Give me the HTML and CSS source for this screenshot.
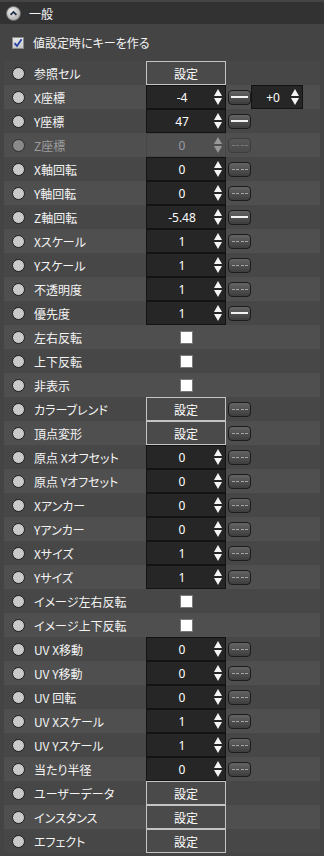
FILE: index.html
```html
<!DOCTYPE html>
<html lang="ja">
<head>
  <meta charset="UTF-8">
  <meta name="viewport" content="width=device-width, initial-scale=1.0">
  <title>一般</title>
  <link rel="stylesheet" href="styles.css">
</head>
<body>
  <div class="panel">
    <div class="header">
      <svg class="fold-icon" width="15" height="15" viewBox="0 0 15 15">
        <defs>
          <radialGradient id="knob" cx="0.4" cy="0.35" r="0.7">
            <stop offset="0" stop-color="#f2f2f2"/>
            <stop offset="1" stop-color="#a8a8a8"/>
          </radialGradient>
        </defs>
        <circle cx="7.5" cy="7.5" r="7" fill="url(#knob)" stroke="#6a6a6a" stroke-width="0.8"/>
        <path d="M4.6 8.8 L7.5 5.9 L10.4 8.8" fill="none" stroke="#1d2e48" stroke-width="1.8"/>
      </svg>
      <span>一般</span>
    </div>

    <label class="keyopt">
      <span class="keycheck">
        <svg width="10" height="10" viewBox="0 0 10 10"><path d="M1.5 5.2 L4 8 L8.6 1.2" fill="none" stroke="#2b47a6" stroke-width="1.9"/></svg>
      </span>
      値設定時にキーを作る
    </label>

    <div class="rows">
      <div class="row"><span class="radio"></span><span class="name">参照セル</span><button class="set">設定</button></div>
      <div class="row"><span class="radio"></span><span class="name">X座標</span><div class="spin"><span class="num">-4</span><i class="arrows"></i></div><span class="bind on"><b></b></span><div class="spin extra"><span class="num">+0</span><i class="arrows"></i></div></div>
      <div class="row"><span class="radio"></span><span class="name">Y座標</span><div class="spin"><span class="num">47</span><i class="arrows"></i></div><span class="bind on"><b></b></span></div>
      <div class="row disabled"><span class="radio"></span><span class="name">Z座標</span><div class="spin"><span class="num">0</span><i class="arrows"></i></div><span class="bind"><b></b></span></div>
      <div class="row"><span class="radio"></span><span class="name">X軸回転</span><div class="spin"><span class="num">0</span><i class="arrows"></i></div><span class="bind"><b></b></span></div>
      <div class="row"><span class="radio"></span><span class="name">Y軸回転</span><div class="spin"><span class="num">0</span><i class="arrows"></i></div><span class="bind"><b></b></span></div>
      <div class="row"><span class="radio"></span><span class="name">Z軸回転</span><div class="spin"><span class="num">-5.48</span><i class="arrows"></i></div><span class="bind on"><b></b></span></div>
      <div class="row"><span class="radio"></span><span class="name">Xスケール</span><div class="spin"><span class="num">1</span><i class="arrows"></i></div><span class="bind"><b></b></span></div>
      <div class="row"><span class="radio"></span><span class="name">Yスケール</span><div class="spin"><span class="num">1</span><i class="arrows"></i></div><span class="bind"><b></b></span></div>
      <div class="row"><span class="radio"></span><span class="name">不透明度</span><div class="spin"><span class="num">1</span><i class="arrows"></i></div><span class="bind"><b></b></span></div>
      <div class="row"><span class="radio"></span><span class="name">優先度</span><div class="spin"><span class="num">1</span><i class="arrows"></i></div><span class="bind on"><b></b></span></div>
      <div class="row"><span class="radio"></span><span class="name">左右反転</span><div class="boolbox"><span class="box"></span></div></div>
      <div class="row"><span class="radio"></span><span class="name">上下反転</span><div class="boolbox"><span class="box"></span></div></div>
      <div class="row"><span class="radio"></span><span class="name">非表示</span><div class="boolbox"><span class="box"></span></div></div>
      <div class="row"><span class="radio"></span><span class="name">カラーブレンド</span><button class="set">設定</button><span class="bind"><b></b></span></div>
      <div class="row"><span class="radio"></span><span class="name">頂点変形</span><button class="set">設定</button><span class="bind"><b></b></span></div>
      <div class="row"><span class="radio"></span><span class="name">原点 Xオフセット</span><div class="spin"><span class="num">0</span><i class="arrows"></i></div><span class="bind"><b></b></span></div>
      <div class="row"><span class="radio"></span><span class="name">原点 Yオフセット</span><div class="spin"><span class="num">0</span><i class="arrows"></i></div><span class="bind"><b></b></span></div>
      <div class="row"><span class="radio"></span><span class="name">Xアンカー</span><div class="spin"><span class="num">0</span><i class="arrows"></i></div><span class="bind"><b></b></span></div>
      <div class="row"><span class="radio"></span><span class="name">Yアンカー</span><div class="spin"><span class="num">0</span><i class="arrows"></i></div><span class="bind"><b></b></span></div>
      <div class="row"><span class="radio"></span><span class="name">Xサイズ</span><div class="spin"><span class="num">1</span><i class="arrows"></i></div><span class="bind"><b></b></span></div>
      <div class="row"><span class="radio"></span><span class="name">Yサイズ</span><div class="spin"><span class="num">1</span><i class="arrows"></i></div><span class="bind"><b></b></span></div>
      <div class="row"><span class="radio"></span><span class="name">イメージ左右反転</span><div class="boolbox"><span class="box"></span></div></div>
      <div class="row"><span class="radio"></span><span class="name">イメージ上下反転</span><div class="boolbox"><span class="box"></span></div></div>
      <div class="row"><span class="radio"></span><span class="name">UV X移動</span><div class="spin"><span class="num">0</span><i class="arrows"></i></div><span class="bind"><b></b></span></div>
      <div class="row"><span class="radio"></span><span class="name">UV Y移動</span><div class="spin"><span class="num">0</span><i class="arrows"></i></div><span class="bind"><b></b></span></div>
      <div class="row"><span class="radio"></span><span class="name">UV 回転</span><div class="spin"><span class="num">0</span><i class="arrows"></i></div><span class="bind"><b></b></span></div>
      <div class="row"><span class="radio"></span><span class="name">UV Xスケール</span><div class="spin"><span class="num">1</span><i class="arrows"></i></div><span class="bind"><b></b></span></div>
      <div class="row"><span class="radio"></span><span class="name">UV Yスケール</span><div class="spin"><span class="num">1</span><i class="arrows"></i></div><span class="bind"><b></b></span></div>
      <div class="row"><span class="radio"></span><span class="name">当たり半径</span><div class="spin"><span class="num">0</span><i class="arrows"></i></div><span class="bind"><b></b></span></div>
      <div class="row"><span class="radio"></span><span class="name">ユーザーデータ</span><button class="set">設定</button></div>
      <div class="row"><span class="radio"></span><span class="name">インスタンス</span><button class="set">設定</button></div>
      <div class="row"><span class="radio"></span><span class="name">エフェクト</span><button class="set">設定</button></div>
    </div>
  </div>
</body>
</html>
```

FILE: styles.css
```css
* {
  margin: 0;
  padding: 0;
  box-sizing: border-box;
}

body {
  width: 324px;
  height: 856px;
  overflow: hidden;
  background: #4a4a4a;
  color: #f4f4f4;
  font-family: "Noto Sans CJK JP", "Noto Sans", sans-serif;
  font-size: 12px;
  font-feature-settings: "palt";
}

.panel {
  height: 100%;
  padding-top: 2px;
  background: #444;
}

.header {
  height: 22px;
  background: #323232;
  display: flex;
  align-items: center;
  gap: 8px;
  padding-left: 6px;
}

.fold-icon {
  display: block;
}

.keyopt {
  height: 37px;
  display: flex;
  align-items: center;
  gap: 9px;
  padding-left: 12px;
}

.keycheck {
  width: 12px;
  height: 12px;
  background: linear-gradient(#e8e8e8, #c8c8c8);
  border: 1px solid #8a8a8a;
  display: flex;
  align-items: center;
  justify-content: center;
}

.keycheck svg {
  display: block;
}

.rows {
  padding: 0 4px;
}

.row {
  height: 24px;
  display: flex;
  align-items: center;
  padding-left: 8px;
  background: #474747;
}

.row:nth-child(even) {
  background: #4f4f4f;
}

.radio {
  width: 13px;
  height: 13px;
  margin-right: 9px;
  border-radius: 50%;
  background: #c9c9c9;
  border: 1px solid #1c1c1c;
}

.name {
  width: 112px;
  white-space: nowrap;
}

.set {
  width: 80px;
  height: 24px;
  background: #4a4a4a;
  border: 1px solid #c4c4c4;
  color: #fff;
  font: inherit;
}

.spin {
  width: 80px;
  height: 24px;
  display: flex;
  align-items: center;
  padding-right: 3px;
  background: #262626;
  border: 1px solid #131313;
  color: #fff;
  font-family: "Noto Sans", sans-serif;
}

.spin .num {
  flex: 1;
  text-align: center;
  padding-left: 3px;
}

.arrows {
  width: 8px;
  height: 16px;
  display: flex;
  flex-direction: column;
  justify-content: space-between;
}

.arrows::before,
.arrows::after {
  content: "";
  height: 7px;
  background: #f4f4f4;
}

.arrows::before {
  clip-path: polygon(50% 0, 100% 100%, 0 100%);
}

.arrows::after {
  clip-path: polygon(0 0, 100% 0, 50% 100%);
}

.spin.extra {
  width: 52px;
}

.bind {
  width: 23px;
  height: 15px;
  margin-left: 2px;
  border: 1px solid #1c1c1c;
  border-radius: 4px;
  background: linear-gradient(#646464, #3d3d3d);
  display: flex;
  align-items: center;
  justify-content: center;
}

.bind b {
  display: block;
  width: 16px;
  height: 1px;
  background: repeating-linear-gradient(90deg, #a2a2a2 0 3px, transparent 3px 4.33px);
}

.bind.on b {
  width: 17px;
  height: 2px;
  background: #f2f2f2;
}

.boolbox {
  width: 80px;
  display: flex;
  justify-content: center;
}

.box {
  width: 13px;
  height: 13px;
  background: #fff;
  border: 1px solid #7a7a7a;
}

.disabled .name {
  color: #9c9c9c;
}

.disabled .radio {
  background: #8a8a8a;
  border-color: #2e2e2e;
}

.disabled .spin {
  background: transparent;
  border-color: #474747;
  color: #9a9aa8;
}

.disabled .arrows {
  opacity: 0.45;
}

.disabled .bind {
  border-color: #3c3c3c;
  background: linear-gradient(#575757, #4a4a4a);
}

.disabled .bind b {
  background: repeating-linear-gradient(90deg, #7a7a7a 0 3px, transparent 3px 4.33px);
}
```
